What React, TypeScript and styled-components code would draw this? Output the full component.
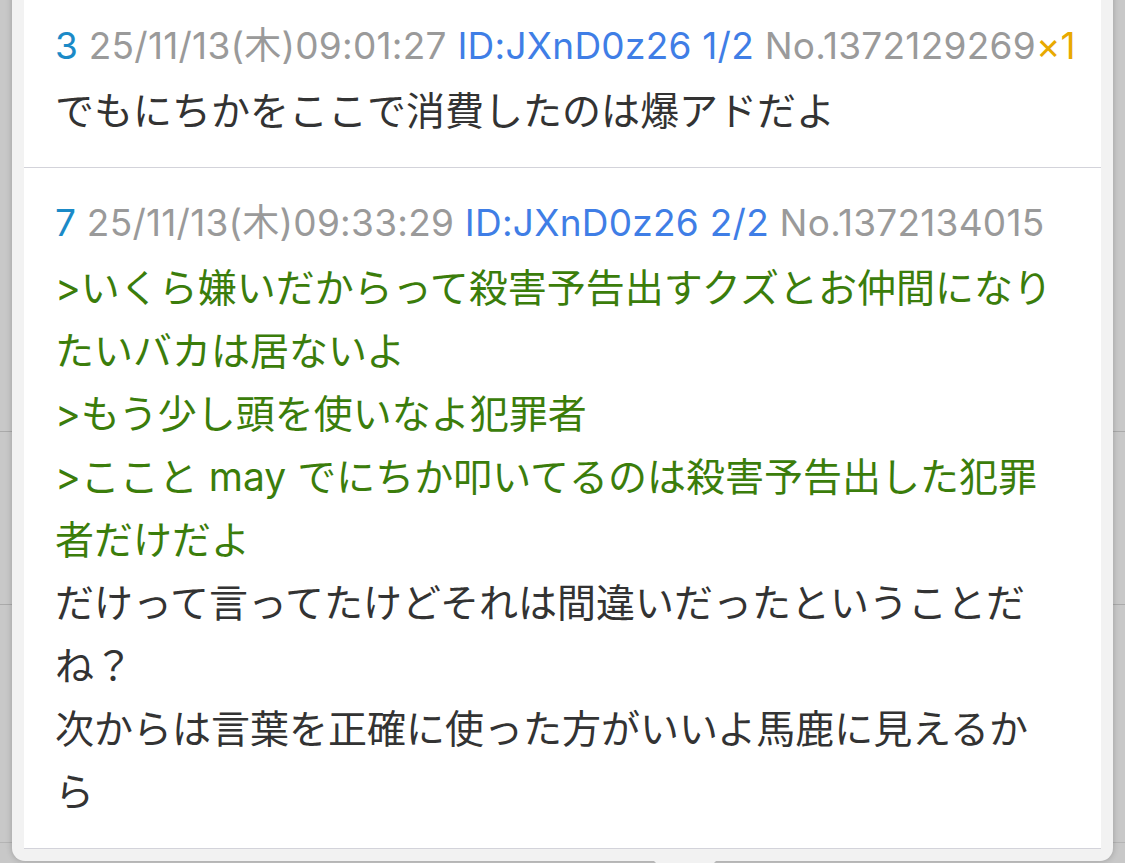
import React from "react";
import styled, { createGlobalStyle } from "styled-components";

const Global = createGlobalStyle`
  html, body {
    margin: 0;
    padding: 0;
  }
  body {
    width: 1125px;
    height: 863px;
    overflow: hidden;
    background-color: #c8c8c8;
    background-image:
      linear-gradient(to bottom, transparent 431px, #aaaaaa 431px, #aaaaaa 432px, transparent 432px),
      linear-gradient(to bottom, transparent 604px, #aaaaaa 604px, #aaaaaa 605px, transparent 605px),
      linear-gradient(to bottom, transparent 842px, #b4b4b4 842px, #b4b4b4 843px, transparent 843px);
    font-family: "Inter", "Noto Sans CJK JP", sans-serif;
  }
`;

const Popup = styled.div`
  position: relative;
  margin: -9px 12px 0;
  background: #f2f2f2;
  padding: 0 12px 12px;
  border-radius: 0 0 13px 13px;
  box-shadow: 0 0 6px rgba(0, 0, 0, 0.22);
`;

const Tail = styled.div`
  position: absolute;
  left: 641px;
  bottom: -31px;
  width: 0;
  height: 0;
  border-left: 32px solid transparent;
  border-right: 32px solid transparent;
  border-top: 32px solid #f2f2f2;
`;

const Sheet = styled.div`
  background: #ffffff;
  display: flex;
  flex-direction: column;
`;

const Post = styled.article`
  padding: 22px 38px 25px 31px;
  border-bottom: 1px solid #d3d3da;
`;

const Header = styled.div`
  font-family: "Inter", "Noto Sans CJK JP", sans-serif;
  font-size: 37px;
  line-height: 66px;
  height: 66px;
  white-space: nowrap;
  color: #9a9a9a;
  letter-spacing: 0.25px;
`;

const Num = styled.span`
  color: #1b8ac7;
`;

const Id = styled.span`
  color: #3f7ee6;
`;

const Count = styled.span`
  color: #e8a900;
`;

const Body = styled.div`
  font-family: "Inter", "Noto Sans CJK JP", sans-serif;
  font-size: 39px;
  line-height: 63px;
  color: #333333;
`;

const Line = styled.div<{ $quote?: boolean }>`
  color: ${(p) => (p.$quote ? "#3b7d0b" : "#333333")};
`;

type PostData = {
  no: string;
  date: string;
  id: string;
  idx: string;
  number: string;
  count?: string;
  lines: { text: string; quote?: boolean }[];
};

const posts: PostData[] = [
  {
    no: "3",
    date: "25/11/13(木)09:01:27",
    id: "ID:JXnD0z26",
    idx: "1/2",
    number: "No.1372129269",
    count: "×1",
    lines: [{ text: "でもにちかをここで消費したのは爆アドだよ" }],
  },
  {
    no: "7",
    date: "25/11/13(木)09:33:29",
    id: "ID:JXnD0z26",
    idx: "2/2",
    number: "No.1372134015",
    lines: [
      { text: ">いくら嫌いだからって殺害予告出すクズとお仲間になりたいバカは居ないよ", quote: true },
      { text: ">もう少し頭を使いなよ犯罪者", quote: true },
      { text: ">ここと may でにちか叩いてるのは殺害予告出した犯罪者だけだよ", quote: true },
      { text: "だけって言ってたけどそれは間違いだったということだね？" },
      { text: "次からは言葉を正確に使った方がいいよ馬鹿に見えるから" },
    ],
  },
];

export default function App() {
  return (
    <>
      <Global />
      <Popup>
        <Sheet>
          {posts.map((p) => (
            <Post key={p.no}>
              <Header>
                <Num>{p.no}</Num> {p.date} <Id>{p.id} {p.idx}</Id> {p.number}
                {p.count && <Count>{p.count}</Count>}
              </Header>
              <Body>
                {p.lines.map((l, i) => (
                  <Line key={i} $quote={l.quote}>
                    {l.text}
                  </Line>
                ))}
              </Body>
            </Post>
          ))}
        </Sheet>
        <Tail />
      </Popup>
    </>
  );
}
